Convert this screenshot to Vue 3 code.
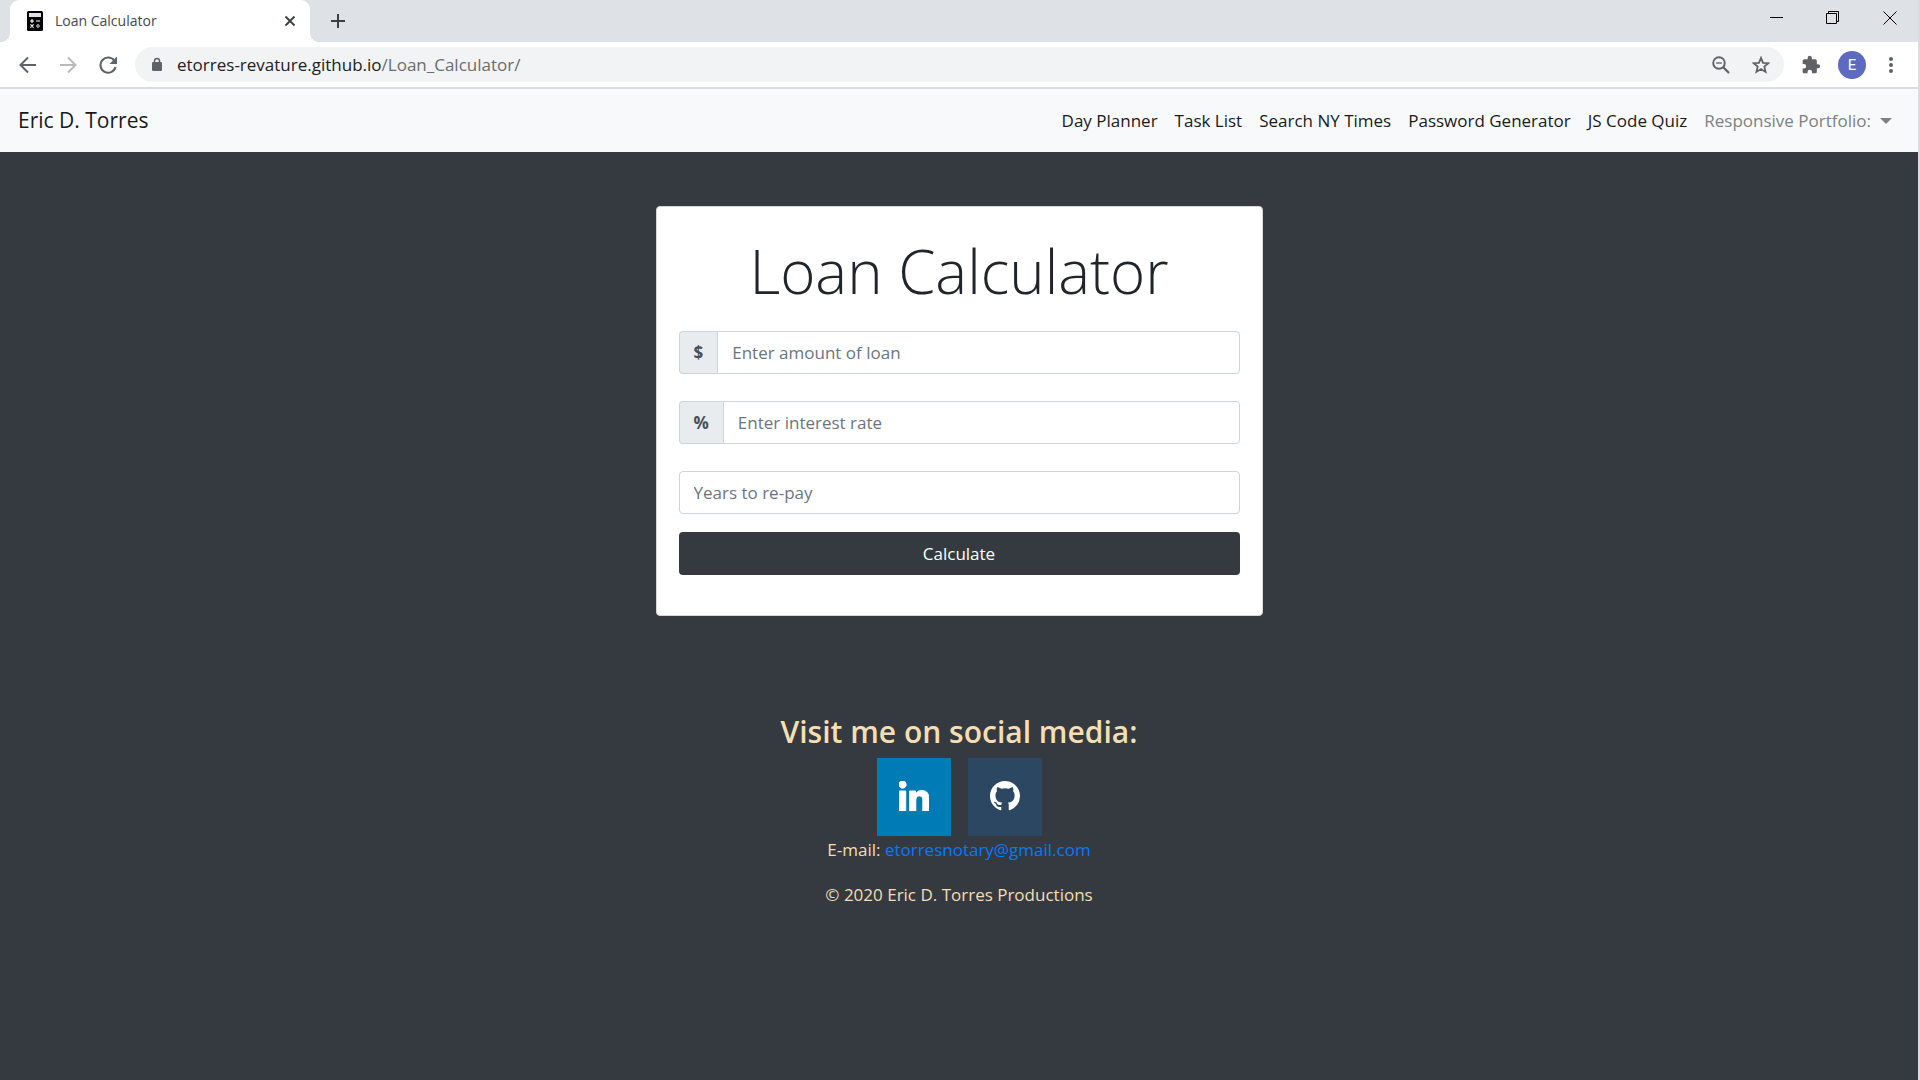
<script setup>
import { ref } from 'vue'

const links = ['Day Planner', 'Task List', 'Search NY Times', 'Password Generator', 'JS Code Quiz']
const amount = ref('')
const interest = ref('')
const years = ref('')
</script>

<template>
  <div class="browser">
    <header class="chrome">
      <div class="tabstrip">
        <div class="tab">
          <svg class="favicon" viewBox="0 0 16 20" aria-hidden="true">
            <rect width="16" height="20" rx="1.5" fill="#000" />
            <rect x="2" y="2" width="12" height="4" fill="#dee1e6" />
            <path d="M3 10h4M5 8v4M9 10h4M3.4 13.4l3.2 3.2M6.6 13.4l-3.2 3.2M9 15h4M11 13v1M11 16v1" stroke="#fff" stroke-width="1.1" />
          </svg>
          <span class="tab-title">Loan Calculator</span>
          <button class="icon-btn tab-close" aria-label="Close tab">
            <svg width="12" height="12" viewBox="0 0 12 12"><path d="M1.5 1.5l9 9M10.5 1.5l-9 9" stroke="#3c4043" stroke-width="1.9" /></svg>
          </button>
        </div>
        <button class="icon-btn new-tab" aria-label="New tab">
          <svg width="16" height="16" viewBox="0 0 16 16"><path d="M8 1v14M1 8h14" stroke="#3c4043" stroke-width="2" /></svg>
        </button>
        <div class="window-controls">
          <button class="icon-btn" aria-label="Minimize">
            <svg width="14" height="14" viewBox="0 0 14 14"><path d="M1 6.5h13" stroke="#000" /></svg>
          </button>
          <button class="icon-btn" aria-label="Restore">
            <svg width="14" height="14" viewBox="0 0 14 14"><path d="M.5 2.5h10v10H.5zM2.5 2.5v-2h10v10h-2" fill="none" stroke="#000" /></svg>
          </button>
          <button class="icon-btn" aria-label="Close window">
            <svg width="14" height="14" viewBox="0 0 14 14"><path d="M.5 .5l13 13M13.5 .5l-13 13" stroke="#000" /></svg>
          </button>
        </div>
      </div>
      <div class="toolbar">
        <div class="nav-buttons">
          <button class="icon-btn" aria-label="Back">
            <svg width="18" height="18" viewBox="0 0 18 18"><path d="M17 9H2M9 1.5L1.5 9L9 16.5" fill="none" stroke="#5f6368" stroke-width="2" /></svg>
          </button>
          <button class="icon-btn" aria-label="Forward">
            <svg width="18" height="18" viewBox="0 0 18 18"><path d="M1 9h15M9 1.5L16.5 9L9 16.5" fill="none" stroke="#bababc" stroke-width="2" /></svg>
          </button>
          <button class="icon-btn" aria-label="Reload">
            <svg width="18" height="18" viewBox="0 0 18 18"><path d="M15.5 5A7.6 7.6 0 1 0 16.5 11" fill="none" stroke="#5f6368" stroke-width="2.1" /><path d="M18 .5v7.5h-7.5z" fill="#5f6368" /></svg>
          </button>
        </div>
        <div class="address">
          <svg class="lock" width="12" height="16" viewBox="0 0 12 16" aria-hidden="true"><rect x="1" y="5" width="10" height="9" rx="1.3" fill="#5f6368" /><path d="M3.500 6V4a2.500 2.500 0 0 1 5 0v2" fill="none" stroke="#5f6368" stroke-width="1.5" /></svg>
          <span class="url">etorres-revature.github.io<span class="path">/Loan_Calculator/</span></span>
          <button class="icon-btn" aria-label="Zoom">
            <svg width="18" height="18" viewBox="0 0 18 18"><circle cx="7" cy="7" r="5.8" fill="none" stroke="#5f6368" stroke-width="1.9" /><path d="M11 11l6 6" stroke="#5f6368" stroke-width="2.3" /><path d="M4 7h6" stroke="#5f6368" stroke-width="1.3" /></svg>
          </button>
          <button class="icon-btn" aria-label="Bookmark this page">
            <svg width="18" height="18" viewBox="0 0 24 24"><path d="M12 2.5l2.7 6.6 7.1.5-5.4 4.6 1.7 7L12 17.4l-6.1 3.800 1.7-7-5.4-4.6 7.1-.5z" fill="none" stroke="#5f6368" stroke-width="2.4" /></svg>
          </button>
        </div>
        <div class="toolbar-actions">
          <button class="icon-btn" aria-label="Extensions">
            <svg width="20" height="20" viewBox="0 0 24 24"><path fill="#5f6368" d="M20.5 11H19V7c0-1.1-.9-2-2-2h-4V3.5a2.5 2.5 0 0 0-5 0V5H4c-1.1 0-2 .9-2 2v3.8h1.5a2.7 2.7 0 0 1 0 5.4H2V20c0 1.1.9 2 2 2h3.8v-1.5a2.7 2.7 0 0 1 5.4 0V22H17c1.1 0 2-.9 2-2v-4h1.5a2.5 2.5 0 0 0 0-5z" /></svg>
          </button>
          <button class="icon-btn avatar" aria-label="Profile">E</button>
          <button class="icon-btn menu" aria-label="Menu">
            <svg width="4" height="16" viewBox="0 0 4 16" fill="#5f6368"><circle cx="2" cy="2" r="2" /><circle cx="2" cy="8" r="2" /><circle cx="2" cy="14" r="2" /></svg>
          </button>
        </div>
      </div>
    </header>

    <nav class="navbar">
      <a class="brand" href="#">Eric D. Torres</a>
      <div class="links">
        <a v-for="link in links" :key="link" href="#">{{ link }}</a>
        <a class="dropdown" href="#">Responsive Portfolio:</a>
      </div>
    </nav>

    <main>
      <form class="card" @submit.prevent>
        <h1>Loan Calculator</h1>
        <div class="field">
          <label for="amount">$</label>
          <input id="amount" v-model="amount" type="text" placeholder="Enter amount of loan" />
        </div>
        <div class="field">
          <label for="interest">%</label>
          <input id="interest" v-model="interest" type="text" placeholder="Enter interest rate" />
        </div>
        <div class="field last">
          <input id="years" v-model="years" type="text" placeholder="Years to re-pay" aria-label="Years to re-pay" />
        </div>
        <button class="calculate" type="submit">Calculate</button>
      </form>
    </main>

    <footer>
      <h2>Visit me on social media:</h2>
      <div class="social">
        <a class="linkedin" href="#" aria-label="LinkedIn">
          <svg width="30" height="30" viewBox="0 0 448 448" fill="#fff"><path d="M100.28 448H7.4V148.9h92.88zM53.79 108.1C24.09 108.1 0 83.5 0 53.8a53.79 53.79 0 0 1 107.58 0c0 29.7-24.1 54.3-53.79 54.3zM447.9 448h-92.68V302.4c0-34.7-.7-79.2-48.29-79.2-48.29 0-55.69 37.7-55.69 76.7V448h-92.78V148.9h89.08v40.8h1.3c12.4-23.5 42.69-48.3 87.88-48.3 94 0 111.28 61.9 111.28 142.3V448z" stroke="#fff" stroke-width="14" /></svg>
        </a>
        <a class="github" href="#" aria-label="GitHub">
          <svg width="30" height="30" viewBox="0 0 16 16" fill="#fff"><path d="M8 0C3.58 0 0 3.58 0 8c0 3.54 2.29 6.53 5.47 7.59.4.07.55-.17.55-.38 0-.19-.01-.82-.01-1.49-2.01.37-2.53-.49-2.69-.94-.09-.23-.48-.94-.82-1.13-.28-.15-.68-.52-.01-.53.63-.01 1.08.58 1.23.82.72 1.21 1.87.87 2.33.66.07-.52.28-.87.51-1.07-1.78-.2-3.64-.89-3.64-3.95 0-.87.31-1.59.82-2.15-.08-.2-.36-1.02.08-2.12 0 0 .67-.21 2.2.82.64-.18 1.32-.27 2-.27s1.36.09 2 .27c1.53-1.04 2.2-.82 2.2-.82.44 1.1.16 1.92.08 2.12.51.56.82 1.27.82 2.15 0 3.07-1.87 3.75-3.65 3.95.29.25.54.73.54 1.48 0 1.07-.01 1.93-.01 2.2 0 .21.15.46.55.38A8.01 8.01 0 0 0 16 8c0-4.42-3.58-8-8-8z" /></svg>
        </a>
      </div>
      <p>E-mail: <a href="mailto:etorresnotary@gmail.com">etorresnotary@gmail.com</a></p>
      <p>© 2020 Eric D. Torres Productions</p>
    </footer>
  </div>
</template>

<style>
body {
  margin: 0;
  background: #343a40;
}
</style>

<style scoped>
* {
  box-sizing: border-box;
}

.browser {
  min-height: 100vh;
  background: #343a40;
  border-right: 2px solid #dadce0;
  font-family: "Open Sans", "Noto Sans", sans-serif;
  font-size: 17px;
  line-height: 27px;
}

a {
  text-decoration: none;
}

svg {
  display: block;
  flex: none;
}

.icon-btn {
  display: flex;
  align-items: center;
  justify-content: center;
  padding: 0;
  border: 0;
  background: none;
}

.chrome {
  background: #fff;
  border-bottom: 2px solid #dadce0;
}

.tabstrip {
  display: flex;
  align-items: center;
  height: 42px;
  padding-left: 10px;
  background: #dee1e6;
}

.tab {
  position: relative;
  display: flex;
  align-items: center;
  width: 300px;
  height: 42px;
  padding: 0 14px 0 17px;
  border-radius: 9px 9px 0 0;
  background: #fff;
}

.tab::before,
.tab::after {
  content: "";
  position: absolute;
  bottom: 0;
  width: 9px;
  height: 9px;
}

.tab::before {
  right: 100%;
  background: radial-gradient(circle at 0 0, transparent 9px, #fff 9px);
}

.tab::after {
  left: 100%;
  background: radial-gradient(circle at 100% 0, transparent 9px, #fff 9px);
}

.favicon {
  width: 16px;
  height: 20px;
}

.tab-title {
  flex: 1;
  margin-left: 12px;
  padding-bottom: 2px;
  color: #45484c;
  font-size: 14px;
}

.new-tab {
  margin-left: 20px;
}

.window-controls {
  display: flex;
  gap: 43px;
  margin-left: auto;
  margin-right: 21px;
  padding-bottom: 6px;
}

.toolbar {
  display: flex;
  align-items: center;
  height: 45px;
  padding: 0 25px 0 19px;
}

.nav-buttons {
  display: flex;
  gap: 22px;
}

.address {
  display: flex;
  flex: 1;
  align-items: center;
  gap: 22px;
  height: 35px;
  margin-left: 18px;
  padding: 0 14px 0 16px;
  border-radius: 18px;
  background: #f1f3f4;
}

.lock {
  margin-right: -8px;
}

.url {
  flex: 1;
  color: #202124;
}

.path {
  color: #696c70;
}

.toolbar-actions {
  display: flex;
  align-items: center;
  gap: 17px;
  margin-left: 17px;
}

.menu {
  margin-left: 6px;
}

.avatar {
  width: 28px;
  height: 28px;
  border-radius: 50%;
  background: #5c6bc0;
  color: #fff;
  font-family: Roboto, sans-serif;
  font-size: 15px;
}

.navbar {
  display: flex;
  align-items: center;
  justify-content: space-between;
  height: 63px;
  padding: 0 26px 0 18px;
  background: #f8f9fa;
}

.brand {
  color: #1a1a1a;
  font-size: 21px;
}

.links {
  display: flex;
  gap: 17px;
}

.links a {
  color: #1a1a1a;
}

.links .dropdown {
  display: flex;
  align-items: center;
  gap: 9px;
  color: #7f8080;
}

.dropdown::after {
  content: "";
  border: 6px solid transparent;
  border-top-color: #7f8080;
  border-bottom: 0;
}

main {
  padding: 54px 20px 0;
}

.card {
  max-width: 607px;
  margin: 0 auto;
  padding: 26px 22px 40px;
  border: 1px solid #d6d7d9;
  border-radius: 4px;
  background: #fff;
}

h1 {
  margin: 0 0 22px;
  color: #212529;
  font-size: 60px;
  font-weight: 300;
  line-height: 76px;
  text-align: center;
}

.field {
  display: flex;
  height: 43px;
  margin-bottom: 27px;
}

.field.last {
  margin-bottom: 18px;
}

.field label {
  display: flex;
  align-items: center;
  padding: 0 14px;
  border: 1px solid #ced4da;
  border-right: 0;
  border-radius: 4px 0 0 4px;
  background: #e9ecef;
  color: #495057;
  font-weight: 700;
}

.field input {
  flex: 1;
  min-width: 0;
  padding: 0 14px;
  border: 1px solid #ced4da;
  border-radius: 4px;
  background: #fff;
  color: #495057;
  font: inherit;
}

.field label + input {
  border-radius: 0 4px 4px 0;
}

.field input::placeholder {
  color: #6c757d;
  opacity: 1;
}

.calculate {
  display: block;
  width: 100%;
  height: 43px;
  padding: 0;
  border: 0;
  border-radius: 4px;
  background: #343a40;
  color: #fff;
  font: inherit;
}

footer {
  padding-top: 96px;
  color: #f5deb3;
  text-align: center;
}

h2 {
  margin: 0 0 7px;
  font-size: 30px;
  font-weight: 600;
  line-height: 39px;
}

.social {
  display: flex;
  justify-content: center;
  gap: 17px;
}

.social a {
  display: flex;
  align-items: center;
  justify-content: center;
  width: 74px;
  height: 78px;
  padding-bottom: 2px;
}

.linkedin {
  background: #007bb5;
}

.github {
  background: #2c4762;
}

p {
  margin: 0 0 18px;
}

p a {
  color: #007bff;
}
</style>
